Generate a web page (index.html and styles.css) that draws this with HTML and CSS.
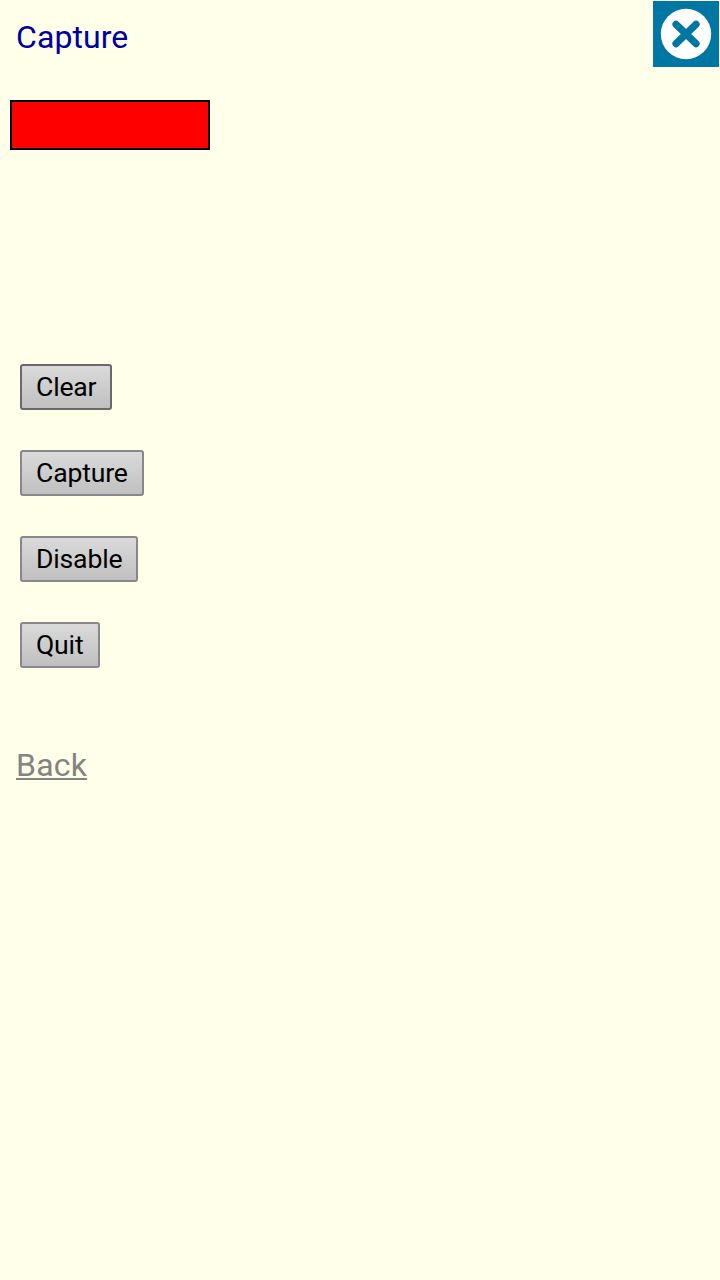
FILE: index.html
```html
<!DOCTYPE html>
<html lang="en">
<head>
<meta charset="utf-8">
<title>Capture</title>
<link rel="stylesheet" href="styles.css">
</head>
<body>
<header class="header">
  <h1 class="title">Capture</h1>
  <svg class="close" viewBox="0 0 66 66" role="img" aria-label="Close">
    <rect width="66" height="66" fill="#0077a3"/>
    <g class="close-mark">
      <circle cx="33" cy="33" r="25.2" fill="#fff"/>
      <path d="M23 23.3L43 42.7M43 23.3L23 42.7" stroke="#0077a3" stroke-width="7.2" stroke-linecap="round"/>
    </g>
  </svg>
</header>
<div class="indicator"></div>
<main class="actions">
  <button class="button button-clear">Clear</button>
  <button class="button button-capture">Capture</button>
  <button class="button button-disable">Disable</button>
  <button class="button button-quit">Quit</button>
</main>
<a class="back" href="#">Back</a>
</body>
</html>
```

FILE: styles.css
```css
body {
  margin: 0;
  min-height: 1280px;
  background: #ffffea;
  font-family: Roboto, sans-serif;
}
.header {
  display: flex;
  justify-content: space-between;
  height: 100px;
  padding: 0 1px 0 16px;
  box-sizing: border-box;
}
.title {
  margin: 18px 0 0;
  font-size: 32px;
  line-height: 38px;
  font-weight: 400;
  letter-spacing: 0.08px;
  color: #0000a0;
}
.close {
  width: 66px;
  height: 66px;
  margin-top: 1px;
}
.close-mark {
  filter: blur(0.6px);
}
.indicator {
  width: 200px;
  height: 50px;
  margin-left: 10px;
  box-sizing: border-box;
  border: 2px solid #000;
  background: #f00;
}
.actions {
  display: flex;
  flex-direction: column;
  align-items: flex-start;
  gap: 40px;
  padding: 214px 20px 0;
}
.button {
  height: 46px;
  padding: 0 0 0 14px;
  box-sizing: border-box;
  border: 2px solid #88888a;
  border-radius: 3px;
  background: linear-gradient(#dadada, #c0c0c0);
  color: #000;
  font: 26.6px/30px Roboto, sans-serif;
  letter-spacing: -0.18px;
  text-align: left;
}
.button-clear {
  width: 92px;
  border-color: #69696b;
}
.button-capture { width: 124px; }
.button-disable { width: 118px; }
.button-quit { width: 80px; }
.back {
  display: block;
  width: max-content;
  margin: 78px 0 0 16px;
  font-size: 32px;
  line-height: 38px;
  letter-spacing: 0.2px;
  color: #848482;
  text-decoration-thickness: 2px;
  text-underline-offset: 2px;
}
```
